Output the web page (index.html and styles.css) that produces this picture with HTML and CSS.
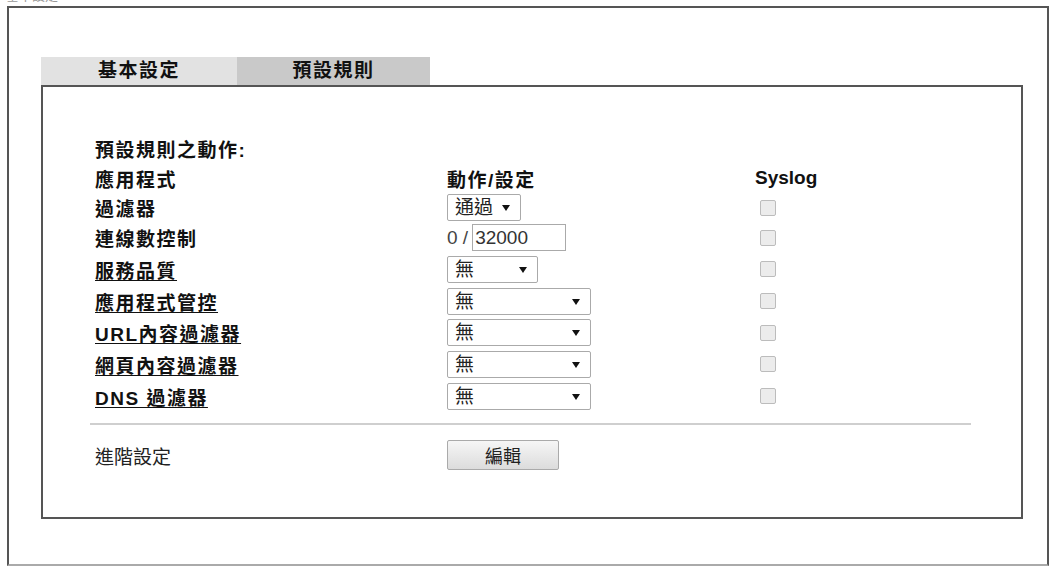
FILE: index.html
```html
<!DOCTYPE html>
<html lang="zh-TW">
<head>
    <meta charset="UTF-8">
    <title>預設規則</title>
    <link rel="stylesheet" href="styles.css">
</head>
<body>
    <div class="page-title">基本設定</div>
    <div class="outer">
        <div class="tabs">
            <div class="tab">基本設定</div>
            <div class="tab active">預設規則</div>
        </div>
        <div class="panel">
            <div class="rules">
                <div class="cell title">預設規則之動作:</div>

                <div class="cell head">應用程式</div>
                <div class="cell head">動作/設定</div>
                <div class="cell head syslog-head">Syslog</div>

                <div class="cell label">過濾器</div>
                <div class="cell"><span class="sel sel-sm">通過</span></div>
                <div class="cell"><span class="chk"></span></div>

                <div class="cell label">連線數控制</div>
                <div class="cell"><span class="conn">0 /</span><span class="num">32000</span></div>
                <div class="cell"><span class="chk"></span></div>

                <div class="cell label"><a href="#">服務品質</a></div>
                <div class="cell"><span class="sel sel-md">無</span></div>
                <div class="cell"><span class="chk"></span></div>

                <div class="cell label"><a href="#">應用程式管控</a></div>
                <div class="cell"><span class="sel sel-lg">無</span></div>
                <div class="cell"><span class="chk"></span></div>

                <div class="cell label"><a href="#">URL內容過濾器</a></div>
                <div class="cell"><span class="sel sel-lg">無</span></div>
                <div class="cell"><span class="chk"></span></div>

                <div class="cell label"><a href="#">網頁內容過濾器</a></div>
                <div class="cell"><span class="sel sel-lg">無</span></div>
                <div class="cell"><span class="chk"></span></div>

                <div class="cell label"><a href="#">DNS 過濾器</a></div>
                <div class="cell"><span class="sel sel-lg">無</span></div>
                <div class="cell"><span class="chk"></span></div>
            </div>
            <div class="divider"></div>
            <div class="advanced">
                <div class="adv-label">進階設定</div>
                <button class="btn">編輯</button>
            </div>
        </div>
    </div>
</body>
</html>
```

FILE: styles.css
```css
body {
    margin: 0;
    background: #fff;
    font-family: "Liberation Sans", "Noto Sans CJK TC", sans-serif;
    color: #111;
    overflow: hidden;
}
.page-title {
    margin-top: -11px;
    margin-left: 6px;
    height: 14px;
    line-height: 14px;
    font-size: 13px;
    color: #999;
}
.outer {
    margin: 3px 2px 0 7px;
    height: 560px;
    border: 2px solid #555;
    border-bottom-color: #aaa;
    padding: 49px 24px 0 32px;
    box-sizing: border-box;
}
.tabs {
    display: flex;
    height: 28px;
}
.tab {
    width: 196px;
    background: #e2e2e2;
    font-size: 19px;
    font-weight: bold;
    letter-spacing: 1.5px;
    text-align: center;
    line-height: 28px;
}
.tab.active {
    width: 193px;
    background: #c9c9c9;
}
.panel {
    border: 2px solid #555;
    padding: 46px 50px 47px 52px;
}
.rules {
    display: grid;
    grid-template-columns: 352px 308px auto;
    grid-template-rows: 30px 30px 29px 31px 32px 32px 31px 32px 32px;
    align-items: center;
}
.cell {
    display: flex;
    align-items: center;
}
.title {
    grid-column: 1 / 4;
}
.title, .head, .label {
    font-size: 19px;
    font-weight: bold;
    letter-spacing: 1.5px;
}
.label a {
    color: #111;
    text-decoration: underline;
    text-underline-offset: 2px;
}
.syslog-head {
    letter-spacing: 0;
}
.sel {
    position: relative;
    box-sizing: border-box;
    height: 27px;
    border: 1px solid #aaa;
    border-radius: 2px;
    padding-left: 7px;
    font-size: 19px;
    line-height: 25px;
    color: #222;
    background: #fff;
}
.sel::after {
    content: "";
    position: absolute;
    right: 10px;
    top: 10px;
    border-left: 4px solid transparent;
    border-right: 4px solid transparent;
    border-top: 6px solid #111;
}
.sel-sm { width: 74px; }
.sel-md { width: 91px; }
.sel-lg { width: 144px; }
.conn {
    font-size: 19px;
    color: #444;
    margin-right: 4px;
}
.num {
    box-sizing: border-box;
    width: 94px;
    height: 27px;
    border: 1px solid #aaa;
    padding-left: 2px;
    font-size: 19px;
    line-height: 25px;
    color: #333;
}
.chk {
    display: block;
    width: 14px;
    height: 14px;
    margin-left: 5px;
    border: 1px solid #bcbcbc;
    border-radius: 2px;
    background: #ececec;
}
.divider {
    margin-top: 11px;
    height: 2px;
    background: #cfcfcf;
    margin-left: -5px;
}
.advanced {
    display: flex;
    align-items: center;
    margin-top: 15px;
}
.adv-label {
    width: 352px;
    font-size: 19px;
    color: #222;
}
.btn {
    width: 112px;
    height: 30px;
    border: 1px solid #aaa;
    border-radius: 2px;
    background: linear-gradient(#f6f6f6, #dcdcdc);
    font-family: "Liberation Sans", "Noto Sans CJK TC", sans-serif;
    font-size: 18px;
    color: #222;
    padding: 0;
}
```
